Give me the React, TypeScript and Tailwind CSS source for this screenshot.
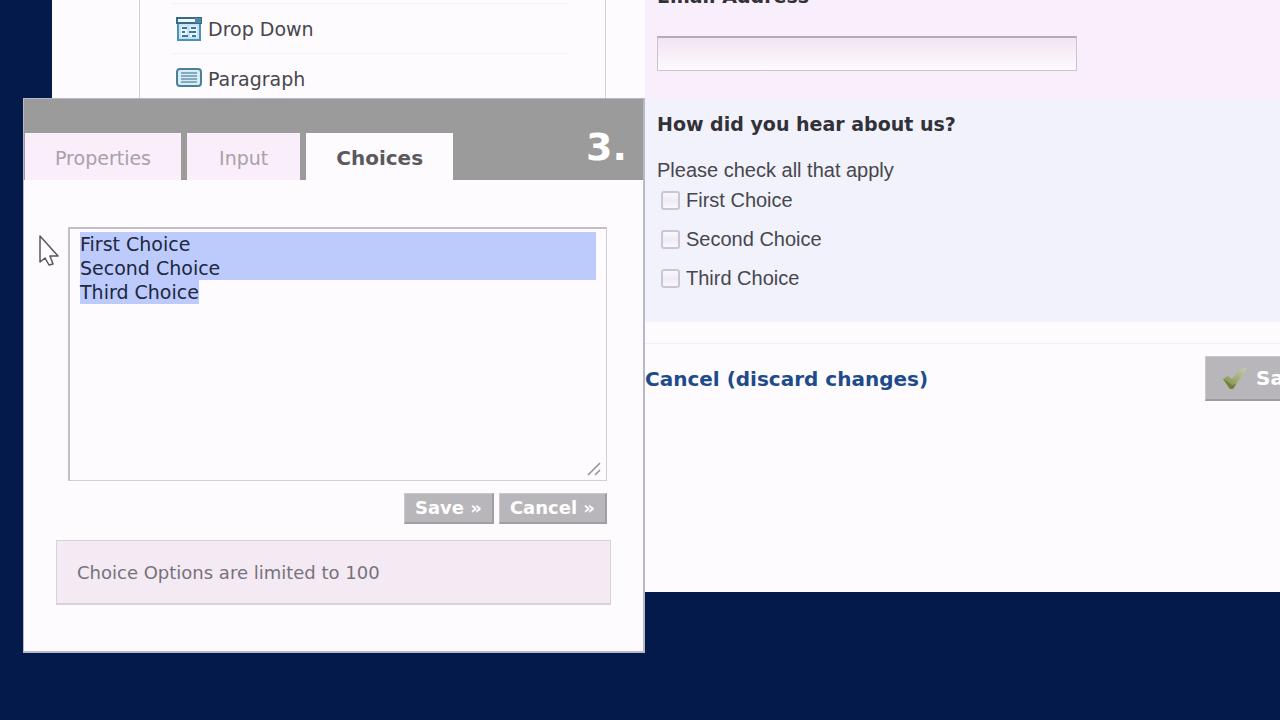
import { useState } from "react";

const tabs = [
  { name: "Properties", size: "px-[30px]" },
  { name: "Input", size: "px-8" },
  { name: "Choices", size: "px-[30px] text-[20px]" },
];

const DropDownIcon = () => (
  <svg width="26" height="26" viewBox="0 0 26 26" fill="none">
    <rect x="2" y="7" width="22" height="17" fill="#c5e3f4" stroke="#4a92b8" strokeWidth="2" />
    <rect x="1" y="2" width="24" height="5" fill="#eef8fd" stroke="#3b6a86" strokeWidth="2" />
    <path d="M19 2h6v5h-6z" fill="#4c86a8" />
    <path d="M5 10h6v11H5zM14 10h7v11h-7z" fill="#eaf6fc" />
    <path d="M6 12h5M6 16h3M6 20h6M15 12h5M13 16h7M16 20h4" stroke="#3f769b" strokeWidth="2" />
  </svg>
);

const ParagraphIcon = () => (
  <svg width="26" height="26" viewBox="0 0 26 26" fill="none">
    <rect x="1" y="3" width="24" height="17" rx="3" fill="#d9ecf6" stroke="#4b8099" strokeWidth="2" />
    <path d="M5 7h16M5 10h16M5 13h16M5 16h16" stroke="#6a94aa" strokeWidth="1.5" />
  </svg>
);

const CheckIcon = () => (
  <svg width="26" height="26" viewBox="0 0 26 26">
    <defs>
      <linearGradient id="check" x1="0" y1="1" x2="1" y2="0">
        <stop offset="0" stopColor="#75873a" />
        <stop offset="1" stopColor="#c9d0ae" />
      </linearGradient>
    </defs>
    <path d="M1 14l5-3 4 3 9-10 6-1L11 24H8z" fill="url(#check)" />
    <path d="M1 14l7 10h3l3-5-4 1z" fill="#5f7229" opacity=".6" />
  </svg>
);

const fields = [
  { label: "Drop Down", icon: <DropDownIcon /> },
  { label: "Paragraph", icon: <ParagraphIcon /> },
];

export default function App() {
  const [active, setActive] = useState<string>("Choices");
  const [choices, setChoices] = useState<string>(
    "First Choice\nSecond Choice\nThird Choice"
  );

  return (
    <div className="relative min-h-screen overflow-hidden bg-[#031a4a] font-['DejaVu_Sans',sans-serif] text-[19px] leading-6 text-[#48464c]">
      <main className="-mr-14 ml-[52px] flex bg-[#fdfbfe]">
        <aside className="w-[593px] shrink-0 pr-[39px] pl-[87px]">
          <ul className="h-full border-x border-[#d3d0d5] pt-[3px] pr-9 pl-8">
            {fields.map((field) => (
              <li
                key={field.label}
                className="flex h-[50px] items-center gap-[6px] border-t border-[#f7f0f8] pl-1"
              >
                {field.icon}
                <a href="#">{field.label}</a>
              </li>
            ))}
          </ul>
        </aside>

        <form
          className="h-[592px] min-w-0 flex-1"
          onSubmit={(e) => e.preventDefault()}
        >
          <section className="flex h-[98px] flex-col bg-[#f9eefb] px-3">
            <label htmlFor="email" className="-mt-4 font-bold text-[#333138]">
              Email Address
            </label>
            <input
              id="email"
              type="text"
              className="mt-7 h-[35px] w-[420px] max-w-full border border-t-2 border-[#cfc2d1] border-t-[#b5abb7] bg-linear-to-b from-[#f1e4f1] to-[#fefaff] px-2 outline-none"
            />
          </section>

          <fieldset className="bg-[#f1f2fc] px-3 pt-[14px] pb-8">
            <legend className="float-left w-full font-bold text-[#333138]">
              How did you hear about us?
            </legend>
            <div className="clear-both pt-[22px] font-['Liberation_Sans',sans-serif] text-[20px]">
              <p>Please check all that apply</p>
              <div className="mt-[6px] flex flex-col gap-[15px] pl-1">
                {["First Choice", "Second Choice", "Third Choice"].map((c) => (
                  <label key={c} className="flex items-center gap-[6px]">
                    <input
                      type="checkbox"
                      className="size-[19px] appearance-none rounded-[3px] border-2 border-[#cac7d3] bg-linear-to-b from-[#faf8fe] via-[#eeebf5] to-[#faf8fe]"
                    />
                    {c}
                  </label>
                ))}
              </div>
            </div>
          </fieldset>

          <footer className="mt-[21px] flex items-center justify-between border-t border-[#f4edf6] pt-3 font-bold">
            <a href="#" className="text-[20px] text-[#1d4b8c]">
              Cancel (discard changes)
            </a>
            <button
              type="submit"
              className="flex h-[45px] w-[131px] items-center gap-2 border border-[#cbc7cd] border-r-[#9d9a9f] border-b-2 border-b-[#9d9a9f] bg-[#b9b6bb] px-4 text-[20px] text-white"
            >
              <CheckIcon />
              Save
            </button>
          </footer>
        </form>
      </main>

      <div
        role="dialog"
        aria-label="Choices"
        className="absolute top-[98px] left-[23px] w-[622px] border border-r-2 border-b-2 border-[#b9b8c6] bg-[#fdfbfe]"
      >
        <header className="flex items-start justify-between bg-[#9b9b9b] pt-[34px] pr-4 pl-px">
          <nav className="flex gap-[6px]">
            {tabs.map((tab) => (
              <button
                key={tab.name}
                onClick={() => setActive(tab.name)}
                className={`h-[47px] pt-[2px] ${tab.size} ${
                  tab.name === active
                    ? "bg-[#fdfbfe] font-bold text-[#5c595e]"
                    : "bg-[#faeefb] text-[#a7a1a9]"
                }`}
              >
                {tab.name}
              </button>
            ))}
          </nav>
          <span className="text-[38px] leading-7 font-bold text-white">3.</span>
        </header>

        <div className="px-8 pt-[47px] pb-[46px]">
          <div className="relative mr-1 ml-3">
            <textarea
              aria-label="Choice options"
              value={choices}
              onChange={(e) => setChoices(e.target.value)}
              className="block h-[254px] w-full resize-none border border-t-2 border-l-2 border-[#d2cfd3] border-t-[#c2c0c4] border-l-[#c2c0c4] bg-[linear-gradient(#bccbfc,#bccbfc),linear-gradient(#bccbfc,#bccbfc)] bg-[length:516px_48px,119px_24px] bg-[position:10px_3px,10px_51px] bg-no-repeat px-[10px] py-[3px] text-[#20273f] outline-none"
            />
            <svg
              className="absolute right-[6px] bottom-[5px]"
              width="14"
              height="14"
              viewBox="0 0 14 14"
              stroke="#918f93"
              strokeWidth="1.5"
            >
              <path d="M1 13L13 1M8 13l5-5" />
            </svg>
          </div>

          <div className="mt-3 mr-1 flex justify-end gap-[5px] text-[18px] font-bold text-white">
            <button className="h-[31px] border border-[#cbc7cd] border-r-2 border-b-2 border-r-[#a19ea3] border-b-[#a19ea3] bg-[#b9b6bb] px-[10px]">
              Save »
            </button>
            <button className="h-[31px] border border-[#cbc7cd] border-r-2 border-b-2 border-r-[#a19ea3] border-b-[#a19ea3] bg-[#b9b6bb] px-[10px]">
              Cancel »
            </button>
          </div>

          <p className="mt-4 border border-b-2 border-[#d9d0da] bg-[#f3eaf3] px-5 pt-5 pb-[18px] text-[18px] text-[#78727b]">
            Choice Options are limited to 100
          </p>
        </div>
      </div>

      {/* mouse pointer */}
      <svg
        className="absolute top-[234px] left-[38px]"
        width="24"
        height="34"
        viewBox="0 0 24 34"
        fill="#fdfbfe"
        stroke="#5b565b"
        strokeWidth="1.5"
        strokeLinejoin="round"
      >
        <path d="M2 2v26l5-4 4 7 4-1-3-8h8z" />
      </svg>
    </div>
  );
}
